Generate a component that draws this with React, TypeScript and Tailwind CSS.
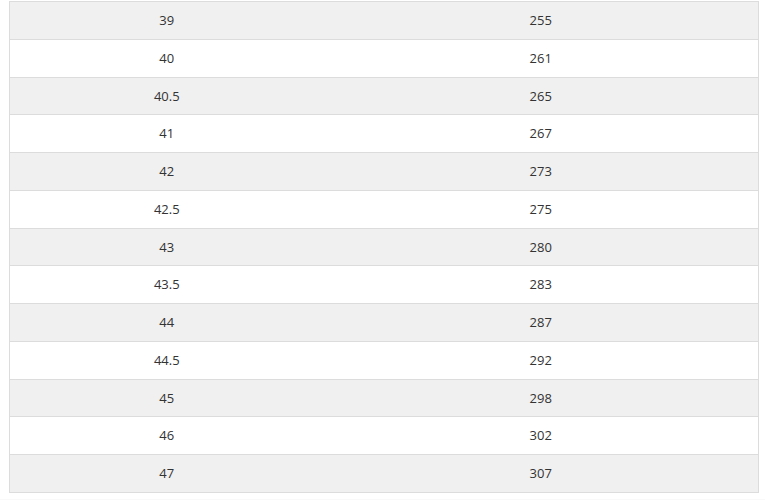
import React from "react";

const rows: [string, string][] = [
  ["39", "255"],
  ["40", "261"],
  ["40.5", "265"],
  ["41", "267"],
  ["42", "273"],
  ["42.5", "275"],
  ["43", "280"],
  ["43.5", "283"],
  ["44", "287"],
  ["44.5", "292"],
  ["45", "298"],
  ["46", "302"],
  ["47", "307"],
];

export default function App() {
  return (
    <div
      className="w-[765px] h-[500px] bg-white overflow-hidden"
      style={{ fontFamily: '"Open Sans", "Liberation Sans", sans-serif' }}
    >
      <div className="pl-[9px] pr-[6px] pt-[1px]">
        <table className="w-[750px] border-collapse text-[13px] text-[#333]">
          <tbody>
            {rows.map(([a, b], i) => (
              <tr key={a} className={i % 2 === 0 ? "bg-[#f0f0f0]" : "bg-white"}>
                <td className="w-[314px] border-y border-l border-[#dcdcdc] py-[10px] text-center leading-[16.77px]">
                  {a}
                </td>
                <td className="border-y border-r border-[#dcdcdc] py-[10px] text-center leading-[16.77px]">
                  {b}
                </td>
              </tr>
            ))}
          </tbody>
        </table>
      </div>
      <div className="mt-[6px] h-[8px] bg-[#f9f9f9]" />
    </div>
  );
}
